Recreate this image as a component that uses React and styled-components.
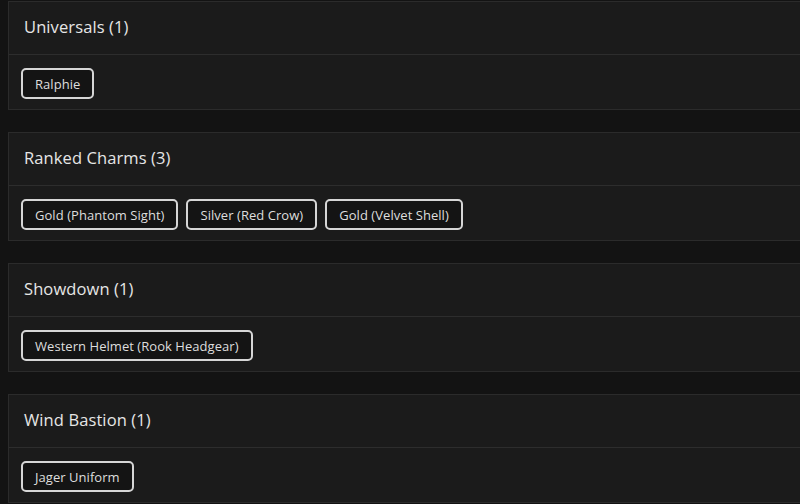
import React from "react";
import { styled, createGlobalStyle } from "styled-components";

const GlobalStyle = createGlobalStyle`
  html, body {
    margin: 0;
    padding: 0;
    background-color: #131313;
    font-family: "Open Sans", "Noto Sans", sans-serif;
    overflow: hidden;
  }
`;

const Page = styled.div`
  display: flex;
  flex-direction: column;
  gap: 22px;
  padding: 1px 0 0 8px;
`;

const Card = styled.section`
  background-color: #1b1b1b;
  border: 1px solid #2b2b2b;
  border-right: none;
  margin-right: -10px;
`;

const CardHeader = styled.div`
  height: 53px;
  box-sizing: border-box;
  display: flex;
  align-items: center;
  padding: 0 15px 3px;
  border-bottom: 1px solid #2d2d2d;
`;

const Title = styled.h3`
  margin: 0;
  color: #e6e6e6;
  font-size: 16.5px;
  font-weight: 500;
  letter-spacing: 0.1px;
`;

const CardBody = styled.div`
  display: flex;
  flex-wrap: wrap;
  gap: 8px;
  padding: 13px 12px 10px;
`;

const Tag = styled.button`
  height: 31px;
  padding: 0 12px;
  background-color: #141414;
  color: #dedede;
  border: 2px solid #d6d6d6;
  border-radius: 5px;
  font-family: inherit;
  font-size: 13px;
  letter-spacing: 0.05px;
  cursor: pointer;
`;

const groups = [
  { name: "Universals", items: ["Ralphie"] },
  {
    name: "Ranked Charms",
    items: ["Gold (Phantom Sight)", "Silver (Red Crow)", "Gold (Velvet Shell)"],
  },
  { name: "Showdown", items: ["Western Helmet (Rook Headgear)"] },
  { name: "Wind Bastion", items: ["Jager Uniform"] },
];

function App() {
  return (
    <>
      <GlobalStyle />
      <Page>
        {groups.map((g) => (
          <Card key={g.name}>
            <CardHeader>
              <Title>
                {g.name} ({g.items.length})
              </Title>
            </CardHeader>
            <CardBody>
              {g.items.map((item) => (
                <Tag key={item}>{item}</Tag>
              ))}
            </CardBody>
          </Card>
        ))}
      </Page>
    </>
  );
}

export default App;
